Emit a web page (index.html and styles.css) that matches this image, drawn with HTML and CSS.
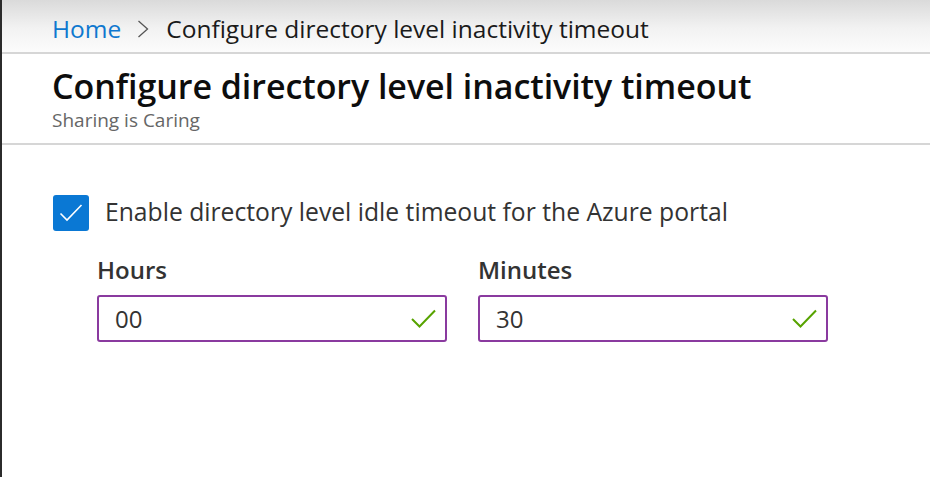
FILE: index.html
```html
<!DOCTYPE html>
<html>
<head>
<meta charset="utf-8">
<link rel="stylesheet" href="styles.css">
</head>
<body>
<div class="page">
  <div class="crumbbar">
    <a class="crumb-home">Home</a>
    <svg class="chev" width="12" height="18" viewBox="0 0 12 18"><path d="M1.5 1 L10.5 9 L1.5 17" fill="none" stroke="#555" stroke-width="1.3"/></svg>
    <span class="crumb-cur">Configure directory level inactivity timeout</span>
  </div>
  <div class="header">
    <h1 class="title">Configure directory level inactivity timeout</h1>
    <div class="subtitle">Sharing is Caring</div>
  </div>
  <div class="content">
    <label class="check-row">
      <span class="checkbox">
        <svg width="24" height="24" viewBox="0 0 24 24"><path d="M1.5 12.5 L8 19 L22.5 4" fill="none" stroke="#fff" stroke-width="1.6"/></svg>
      </span>
      <span class="check-label">Enable directory level idle timeout for the Azure portal</span>
    </label>
    <div class="fields">
      <div class="field">
        <div class="field-label">Hours</div>
        <div class="input">
          <span class="value">00</span>
          <svg class="ok" width="25" height="19" viewBox="0 0 25 19"><path d="M1 10 L8.5 17.5 L24 1.5" fill="none" stroke="#57a300" stroke-width="2"/></svg>
        </div>
      </div>
      <div class="field">
        <div class="field-label">Minutes</div>
        <div class="input">
          <span class="value">30</span>
          <svg class="ok" width="25" height="19" viewBox="0 0 25 19"><path d="M1 10 L8.5 17.5 L24 1.5" fill="none" stroke="#57a300" stroke-width="2"/></svg>
        </div>
      </div>
    </div>
  </div>
</div>
</body>
</html>
```

FILE: styles.css
```css
html, body {
  margin: 0;
  padding: 0;
  background: #fff;
}
body {
  font-family: "Open Sans", "Noto Sans", sans-serif;
  color: #333;
}
.page {
  width: 930px;
  height: 477px;
  box-sizing: border-box;
  border-left: 2px solid #2b2b2b;
  overflow: hidden;
}
.crumbbar {
  height: 54px;
  box-sizing: border-box;
  border-bottom: 2px solid #d6d6d6;
  background: linear-gradient(#dadada 0px, #f2f2f2 28px, #fcfcfc 52px);
  display: flex;
  align-items: center;
  padding: 5px 0 0 50px;
  font-size: 24.5px;
}
.crumb-home {
  color: #0f78cf;
}
.chev {
  margin: 0 17px 0 16px;
}
.crumb-cur {
  color: #1a1a1a;
}
.header {
  height: 91px;
  box-sizing: border-box;
  border-bottom: 2px solid #d6d6d6;
  padding: 12px 0 0 50px;
}
.title {
  margin: 0;
  font-size: 34px;
  font-weight: 600;
  color: #0d0d0d;
  line-height: 40px;
  letter-spacing: -0.05px;
}
.subtitle {
  font-size: 19px;
  color: #666;
  line-height: 22px;
  margin-top: 3px;
}
.content {
  padding: 50px 0 0 51px;
}
.check-row {
  display: flex;
  align-items: center;
}
.checkbox {
  width: 36px;
  height: 36px;
  background: #0a78d4;
  border-radius: 3px;
  display: flex;
  align-items: center;
  justify-content: center;
}
.check-label {
  margin-left: 16px;
  font-size: 24.7px;
  color: #333;
  margin-top: -3px;
}
.fields {
  display: flex;
  gap: 31px;
  padding-left: 44px;
  margin-top: 24px;
}
.field {
  width: 350px;
}
.field-label {
  font-size: 24px;
  font-weight: 600;
  color: #333;
  line-height: 30px;
  margin-bottom: 10px;
}
.input {
  height: 47px;
  box-sizing: border-box;
  border: 2px solid #8a3a9f;
  border-radius: 3px;
  display: flex;
  align-items: center;
  justify-content: space-between;
  padding: 0 9px 0 16px;
}
.value {
  font-size: 24px;
  color: #333;
}
```
